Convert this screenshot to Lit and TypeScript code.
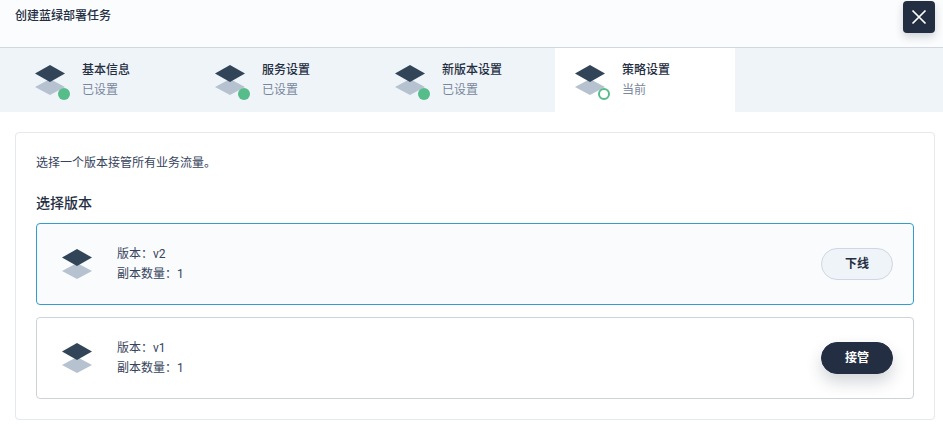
import { LitElement, html, css } from "lit";
import { customElement } from "lit/decorators.js";

const steps = [
  { title: "基本信息", desc: "已设置", done: true },
  { title: "服务设置", desc: "已设置", done: true },
  { title: "新版本设置", desc: "已设置", done: true },
  { title: "策略设置", desc: "当前", done: false },
];

const versions = [
  { name: "v2", replicas: 1, active: true, action: "下线" },
  { name: "v1", replicas: 1, active: false, action: "接管" },
];

const layers = html`<svg class="layers" width="30" height="30" viewBox="0 0 30 30">
  <path d="M15 14 30 22 15 30 0 22Z" fill="#b6c2cf" />
  <path d="M15 0 30 8.5 15 17 0 8.5Z" fill="#324558" />
</svg>`;

@customElement("app-root")
export default class AppRoot extends LitElement {
  static styles = css`
    :host {
      display: block;
      height: 428px;
      overflow: hidden;
      background: #fff;
      color: #242e42;
      font-family: Roboto, "Noto Sans CJK SC", sans-serif;
      font-size: 12px;
      line-height: 20px;
    }
    .header {
      display: flex;
      justify-content: space-between;
      height: 48px;
      padding: 1px 8px 0 15px;
      box-sizing: border-box;
      background: #fbfcfd;
      border-bottom: 1px solid #d1d7e0;
    }
    .header h1 {
      margin: 5px 0 0;
      font-size: 12px;
      font-weight: 500;
      line-height: 20px;
    }
    .close {
      display: flex;
      align-items: center;
      justify-content: center;
      width: 32px;
      height: 32px;
      padding: 0;
      border: 0;
      border-radius: 4px;
      background: #242e42;
      box-shadow: 0 4px 8px rgba(36, 46, 66, 0.2);
    }
    .steps {
      display: flex;
      height: 64px;
      padding-left: 15px;
      background: #eff4f9;
    }
    .step {
      display: flex;
      align-items: flex-start;
      gap: 17px;
      width: 180px;
      box-sizing: border-box;
      padding: 17px 20px 0;
    }
    .step.current {
      background: #fff;
    }
    .step-icon {
      position: relative;
      width: 30px;
      height: 30px;
    }
    .layers {
      display: block;
    }
    .dot {
      position: absolute;
      right: -5px;
      bottom: -5px;
      width: 12px;
      height: 12px;
      border-radius: 50%;
      background: #55bc8a;
    }
    .dot.open {
      box-sizing: border-box;
      background: #fff;
      border: 2px solid #55bc8a;
    }
    .step-text {
      margin-top: -5px;
    }
    .step-title {
      font-weight: 500;
    }
    .step-desc {
      color: #79879c;
    }
    .card {
      margin: 20px 8px 0 15px;
      padding: 20px;
      border: 1px solid #e3e9ef;
      border-radius: 4px;
    }
    .hint {
      margin: 0;
      color: #36435c;
    }
    h2 {
      margin: 20px 0 10px;
      font-size: 14px;
      font-weight: 500;
      line-height: 20px;
    }
    .options {
      display: flex;
      flex-direction: column;
      gap: 12px;
    }
    .option {
      display: flex;
      align-items: center;
      height: 82px;
      box-sizing: border-box;
      padding: 0 20px 0 25px;
      border: 1px solid #ccd3db;
      border-radius: 4px;
    }
    .option.active {
      border-color: #329dce;
      background: #f9fbfd;
    }
    .info {
      flex: 1;
      margin-left: 25px;
      color: #36435c;
    }
    .action {
      width: 72px;
      height: 32px;
      padding: 0;
      border: 1px solid #d1d7e0;
      border-radius: 16px;
      background: #eff4f9;
      color: #242e42;
      font: inherit;
      font-weight: 600;
    }
    .action.primary {
      border-color: #242e42;
      background: #242e42;
      color: #fff;
      box-shadow: 0 8px 16px rgba(36, 46, 66, 0.2);
    }
  `;

  render() {
    return html`
      <div class="header">
        <h1>创建蓝绿部署任务</h1>
        <button class="close">
          <svg width="16" height="16" viewBox="0 0 16 16">
            <path d="M1.5 1.5 14.5 14.5M14.5 1.5 1.5 14.5" stroke="#fff" stroke-width="1.7" fill="none" />
          </svg>
        </button>
      </div>
      <div class="steps">
        ${steps.map(
          (s) => html`<div class="step ${s.done ? "" : "current"}">
            <div class="step-icon">
              ${layers}
              <span class="dot ${s.done ? "" : "open"}"></span>
            </div>
            <div class="step-text">
              <div class="step-title">${s.title}</div>
              <div class="step-desc">${s.desc}</div>
            </div>
          </div>`
        )}
      </div>
      <div class="card">
        <p class="hint">选择一个版本接管所有业务流量。</p>
        <h2>选择版本</h2>
        <div class="options">
          ${versions.map(
            (v) => html`<div class="option ${v.active ? "active" : ""}">
              ${layers}
              <div class="info">
                <div>版本：${v.name}</div>
                <div>副本数量：${v.replicas}</div>
              </div>
              <button class="action ${v.active ? "" : "primary"}">${v.action}</button>
            </div>`
          )}
        </div>
      </div>
    `;
  }
}
